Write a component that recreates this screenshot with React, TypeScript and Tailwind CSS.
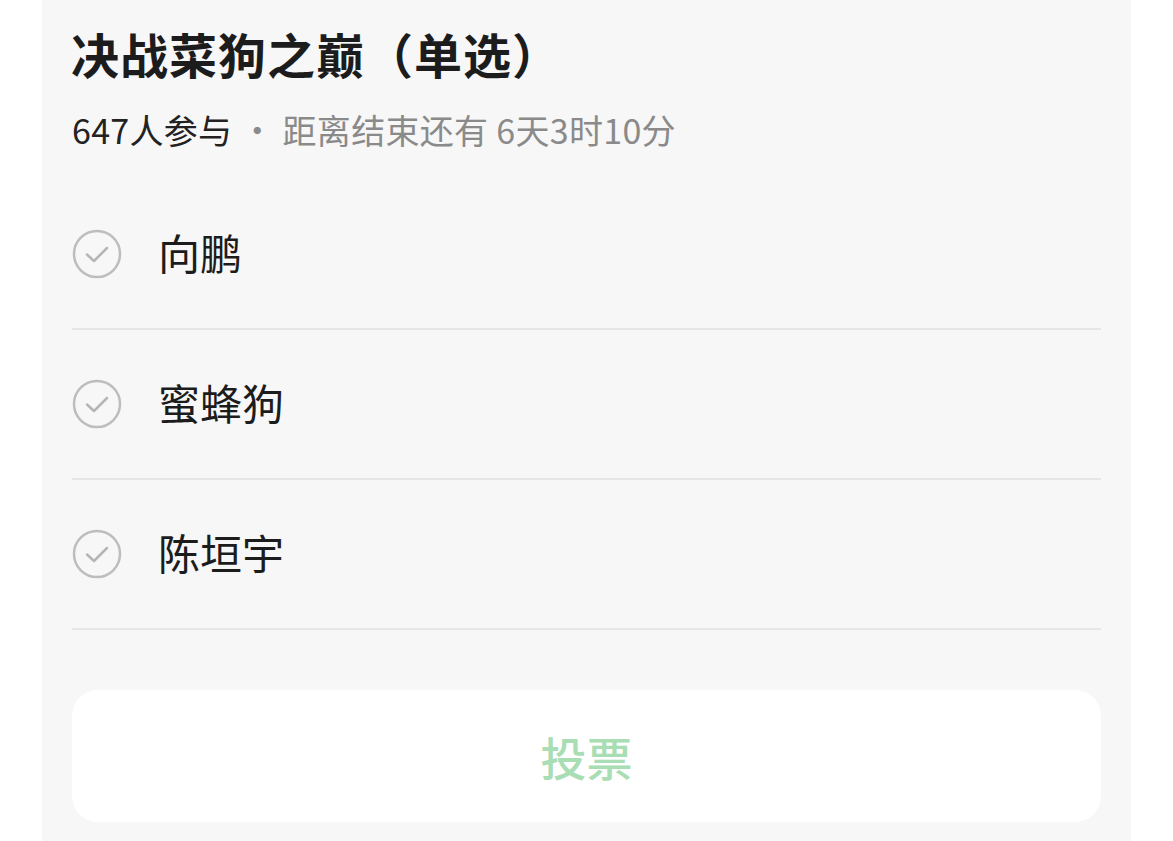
import React from "react";

const options = ["向鹏", "蜜蜂狗", "陈垣宇"];

function CheckCircle() {
    return (
        <svg width="50" height="50" viewBox="0 0 50 50" fill="none">
            <circle cx="25" cy="25" r="23" stroke="#bdbdbd" strokeWidth="2.5" />
            <path d="M15 25.5 L22 32 L35 19" stroke="#b5b5b5" strokeWidth="2.5" strokeLinecap="round" strokeLinejoin="round" />
        </svg>
    );
}

export default function App() {
    return (
        <div
            className="w-[1173px] h-[841px] bg-white overflow-hidden pl-[42px]"
            style={{ fontFamily: '"Noto Sans CJK SC", "Noto Sans", sans-serif' }}
        >
            <div className="w-[1089px] h-full bg-[#f7f7f7] px-[30px] pt-[24px]">
                <div className="text-[48px] leading-[58px] font-bold tracking-[1px] text-[#1c1c1c] -ml-[1px]">
                    决战菜狗之巅（单选）
                </div>
                <div className="mt-[28px] text-[34px] leading-[40px] tracking-[0.3px] text-[#8a8a8a]">
                    <span className="text-[#222]">647人参与</span> · 距离结束还有 6天3时10分
                </div>

                <div className="mt-[30px]">
                    {options.map((name) => (
                        <div key={name} className="h-[150px] flex items-center border-b-2 border-[#e6e6e6]">
                            <CheckCircle />
                            <span className="ml-[36px] pb-[5px] text-[42px] text-[#1c1c1c]">{name}</span>
                        </div>
                    ))}
                </div>

                <button className="mt-[60px] w-full h-[132px] rounded-[26px] bg-white flex items-center justify-center text-[46px] font-medium text-[#a9ddb3]">
                    投票
                </button>
            </div>
        </div>
    );
}
